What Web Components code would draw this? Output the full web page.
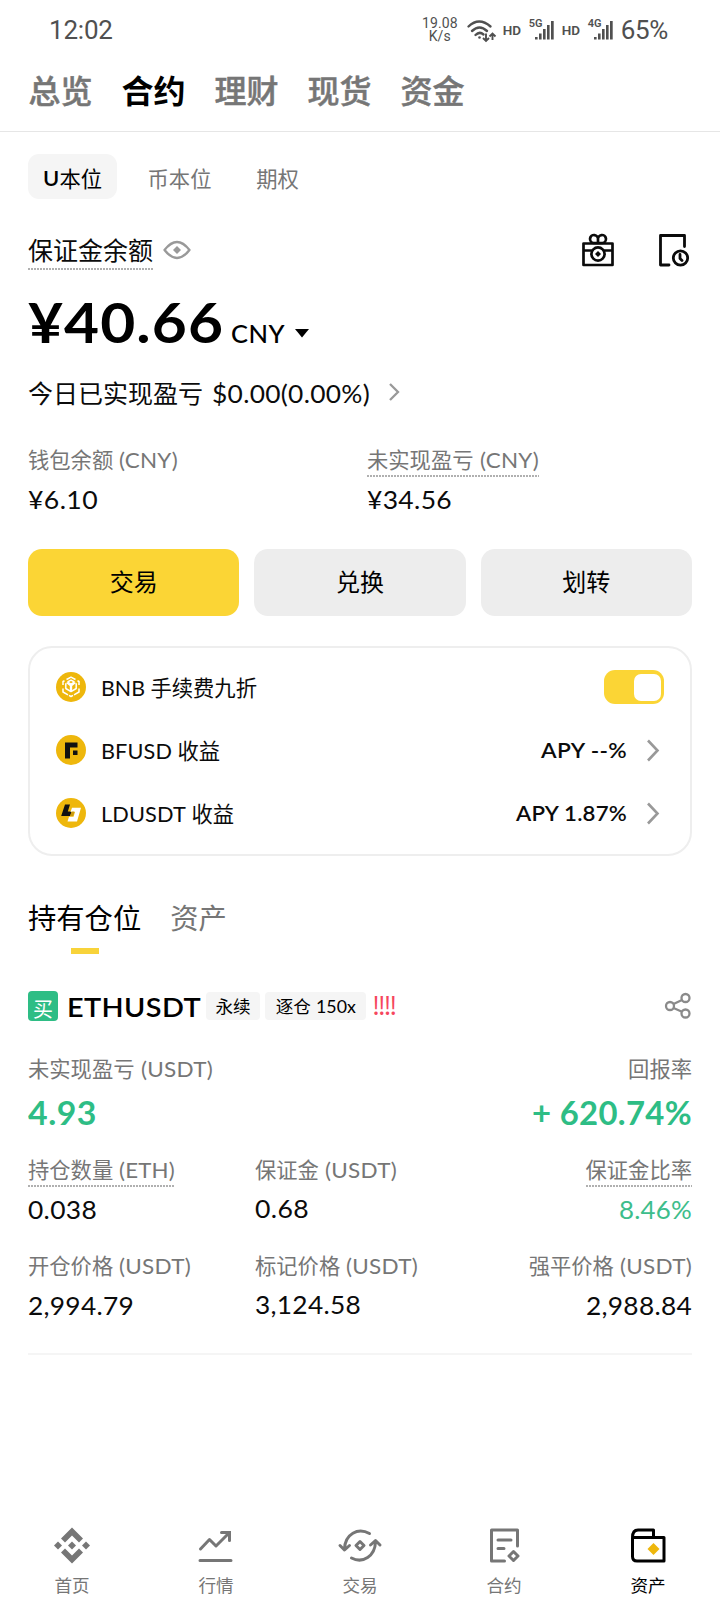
<!DOCTYPE html>
<html lang="zh-CN">
<head>
<meta charset="utf-8">
<meta name="viewport" content="width=device-width">
<title>合约资产</title>
<style>
html,body{margin:0;background:#fff}
body{font-family:Lato,"Noto Sans CJK SC",sans-serif;color:#0b0b0b}
</style>
</head>
<body>
<wallet-page></wallet-page>
<script>
const define=(name,html,setup)=>{
  const t=document.createElement('template');
  t.innerHTML=html;
  customElements.define(name,class extends HTMLElement{
    constructor(){super();this.attachShadow({mode:'open'}).append(t.content.cloneNode(true));}
    connectedCallback(){if(setup)setup(this,this.shadowRoot);}
  });
};

define('wallet-page',`<style>
:host{display:flex;flex-direction:column;width:720px;height:1600px;overflow:hidden;background:#fff}
main{padding:0 28px;display:flex;flex-direction:column}
.pills{display:flex;margin-top:22px;height:45px}
.balance{display:flex;align-items:center;height:41px;margin-top:31px;font-size:25px}
.balance .sp{flex:1}
.amount{display:flex;align-items:baseline;height:101px;line-height:102px;font-size:56px;font-weight:700;color:#000}
.amount .cur{font-size:24px;font-weight:500;margin-left:7px}
.today{display:flex;align-items:center;height:42px;font-size:25px;line-height:42px}
.wallet{display:grid;grid-template-columns:339px 1fr;margin-top:27px}
.actions{display:grid;grid-template-columns:repeat(3,1fr);gap:15px;margin-top:28px}
.head{display:flex;align-items:center;height:30px;margin-top:37px}
.sym{font-size:27.5px;font-weight:600;color:#000;margin:1px 5px 0 9px;line-height:30px}
.pnl{display:flex;justify-content:space-between;margin-top:29px}
.grid{display:grid;grid-template-columns:227px 227px 1fr;row-gap:16px;margin-top:11px}
hr{border:0;height:2px;background:#f5f5f5;margin:26px 0 0;width:664px}
bottom-nav{margin-top:auto}
</style>
<status-bar></status-bar>
<top-tabs></top-tabs>
<main>
 <div class="pills"><pill-tab active style="width:89px"><l-t w="16.5" style="font-weight:600">U</l-t>本位</pill-tab><pill-tab style="width:125px">币本位</pill-tab><pill-tab style="width:71px">期权</pill-tab></div>
 <div class="balance"><dotted-label style="--off:18.5px">保证金余额</dotted-label><ui-icon name="eye" style="margin:-2px 0 0 10px"></ui-icon><span class="sp"></span><ui-icon name="gift" style="margin-top:-1px"></ui-icon><ui-icon name="history" style="margin:-1px 3px 0 43px"></ui-icon></div>
 <div class="amount"><l-t w="196">¥40.66</l-t><span class="cur"><l-t w="54">CNY</l-t></span><ui-icon name="caret" style="margin-left:10px;align-self:flex-start;margin-top:58px"></ui-icon></div>
 <div class="today">今日已实现盈亏<l-t w="158" style="margin-left:9px">$0.00(0.00%)</l-t><ui-icon name="chev-s" style="margin:-2px 0 0 18px"></ui-icon></div>
 <div class="wallet">
  <stat-cell><span slot="label">钱包余额 <l-t w="59">(CNY)</l-t></span><l-t w="70">¥6.10</l-t></stat-cell>
  <stat-cell><dotted-label slot="label" style="--off:15.5px">未实现盈亏 <l-t w="59">(CNY)</l-t></dotted-label><l-t w="85">¥34.56</l-t></stat-cell>
 </div>
 <div class="actions"><action-button style="--bg:#fbd535">交易</action-button><action-button>兑换</action-button><action-button>划转</action-button></div>
 <perk-card>
  <perk-row><ui-icon slot="icon" name="bnb"></ui-icon><l-t w="44">BNB</l-t> 手续费九折<toggle-switch slot="end"></toggle-switch></perk-row>
  <perk-row><ui-icon slot="icon" name="bfusd"></ui-icon><l-t w="71">BFUSD</l-t> 收益<span slot="end"><l-t w="86">APY --%</l-t></span><ui-icon slot="end" name="chev" style="margin:0 4px 0 19px"></ui-icon></perk-row>
  <perk-row><ui-icon slot="icon" name="ldusdt"></ui-icon><l-t w="85">LDUSDT</l-t> 收益<span slot="end"><l-t w="111">APY 1.87%</l-t></span><ui-icon slot="end" name="chev" style="margin:0 4px 0 19px"></ui-icon></perk-row>
 </perk-card>
 <section-tabs></section-tabs>
 <div class="head"><side-badge>买</side-badge><span class="sym"><l-t w="134">ETHUSDT</l-t></span><mini-tag style="width:54px">永续</mini-tag><mini-tag style="width:101px;margin-left:5px">逐仓 <l-t w="40">150x</l-t></mini-tag><risk-mark>!!!!</risk-mark><ui-icon name="share" style="margin-left:auto;margin-right:1px"></ui-icon></div>
 <div class="pnl">
  <stat-cell big><span slot="label">未实现盈亏 <l-t w="72">(USDT)</l-t></span><l-t w="69">4.93</l-t></stat-cell>
  <stat-cell big end><span slot="label">回报率</span><l-t w="160">+ 620.74%</l-t></stat-cell>
 </div>
 <div class="grid">
  <stat-cell><dotted-label slot="label" style="--off:16px">持仓数量 <l-t w="56">(ETH)</l-t></dotted-label><l-t w="69">0.038</l-t></stat-cell>
  <stat-cell><span slot="label">保证金 <l-t w="72">(USDT)</l-t></span><l-t w="54" style="margin-top:-1px">0.68</l-t></stat-cell>
  <stat-cell end style="--val:#3dbd8b"><dotted-label slot="label" style="--off:16px">保证金比率</dotted-label><l-t w="73">8.46%</l-t></stat-cell>
  <stat-cell><span slot="label">开仓价格 <l-t w="72">(USDT)</l-t></span><l-t w="106">2,994.79</l-t></stat-cell>
  <stat-cell><span slot="label">标记价格 <l-t w="72">(USDT)</l-t></span><l-t w="106" style="margin-top:-1px">3,124.58</l-t></stat-cell>
  <stat-cell end><span slot="label">强平价格 <l-t w="72">(USDT)</l-t></span><l-t w="106">2,988.84</l-t></stat-cell>
 </div>
 <hr>
</main>
<bottom-nav></bottom-nav>`);

define('status-bar',`<style>
:host{display:flex;align-items:center;height:59px;padding:0 52px 0 49px;font-family:Roboto,sans-serif;color:#505050}
.time{font-size:26px;flex:1;letter-spacing:-.2px}
.rate{display:flex;flex-direction:column;align-items:center;font-size:14px;line-height:12.5px;margin-right:9px;letter-spacing:.1px}
.hd{font-size:13.5px;font-weight:600;width:19px;margin-right:7px}
.sig{display:flex;width:26px;margin-right:7px}
.sig span{font-size:11px;font-weight:600;line-height:10px;width:15px;margin:0 -9px 0 0;align-self:flex-start}
.pct{font-size:26px;letter-spacing:-.3px}
ui-icon{margin-top:2px}
</style><span class="time">12:02</span><span class="rate"><span>19.08</span><span>K/s</span></span><ui-icon name="wifi" style="margin-right:6px"></ui-icon><span class="hd">HD</span><span class="sig"><span>5G</span><ui-icon name="bars"></ui-icon></span><span class="hd">HD</span><span class="sig"><span>4G</span><ui-icon name="bars"></ui-icon></span><span class="pct">65%</span>`);

define('top-tabs',`<style>
:host{display:flex;gap:29px;padding:0 28.5px 11px;height:61px;border-bottom:1px solid #e6e6e6;line-height:61px;font-size:32px;font-weight:500;color:#767676;font-family:"Noto Sans CJK SC",sans-serif}
span{-webkit-text-stroke:.5px currentColor}
b{font-weight:700;color:#000}
</style><span>总览</span><b>合约</b><span>理财</span><span>现货</span><span>资金</span>`);

define('pill-tab',`<style>
:host{display:flex;justify-content:center;align-items:center;height:45px;box-sizing:border-box;padding-top:2px;border-radius:11px;font-size:21.3px;color:#767676}
:host([active]){background:#f5f5f5;color:#000}
</style><slot></slot>`);

define('dotted-label',`<style>
:host{display:inline-block;height:calc(var(--off)*2 + 2px);line-height:calc(var(--off)*2 + 2px);background:repeating-linear-gradient(90deg,#b0b0b0 0 2px,transparent 2px 3px) 0 100%/100% 2px no-repeat}
</style><slot></slot>`);

define('stat-cell',`<style>
:host{display:flex;flex-direction:column;align-items:flex-start;color:var(--val,#0b0b0b)}
:host([end]){align-items:flex-end}
.l{height:38px;line-height:38px;display:flex;align-items:center;color:#767676;font-size:21.3px;white-space:pre;word-spacing:.7px}
.v{height:42px;line-height:41px;font-size:25px;display:flex}
:host([big]){color:#2ebd85}
:host([big]) .l{height:37px}
:host([big]) .v{height:53px;line-height:53px;font-size:31.5px;font-weight:700}
</style><div class="l"><slot name="label"></slot></div><div class="v"><slot></slot></div>`);

define('action-button',`<style>
:host{display:flex;align-items:center;justify-content:center;height:67px;border-radius:14px;background:var(--bg,#ededed);font-size:24px;line-height:30px;padding-bottom:1px;box-sizing:border-box;color:#000}
</style><slot></slot>`);

define('perk-card',`<style>
:host{display:block;box-sizing:border-box;height:210px;margin-top:30px;border:2px solid #eee;border-radius:24px;padding:7.5px 26px 0 26px}
</style><slot></slot>`);

define('perk-row',`<style>
:host{display:flex;align-items:center;height:63px;font-size:21.3px}
.t{margin:-1px auto 0 15px;white-space:pre}
.e{display:flex;align-items:center;font-weight:600;line-height:23px}
</style><slot name="icon"></slot><span class="t"><slot></slot></span><span class="e"><slot name="end"></slot></span>`);

define('toggle-switch',`<style>
:host{display:flex;justify-content:flex-end;box-sizing:border-box;width:60px;height:34px;padding:3.5px;border-radius:11px;background:#fbd535}
i{width:27px;height:27px;border-radius:7px;background:#fff}
</style><i></i>`);

define('section-tabs',`<style>
:host{display:flex;gap:29px;height:56px;margin-top:42px;font-size:28.3px;line-height:40px;color:#767676}
div{display:flex;flex-direction:column;align-items:center;gap:10px;color:#000}
i{width:28px;height:6px;background:#f8d33a}
</style><div>持有仓位<i></i></div><span>资产</span>`);

define('side-badge',`<style>
:host{display:flex;box-sizing:border-box;width:30px;height:30px;padding-top:6px;justify-content:center;border-radius:4px;background:#2ebd85;color:#fff;font-size:20px;line-height:24px}
</style><slot></slot>`);

define('mini-tag',`<style>
:host{display:block;box-sizing:border-box;height:28px;line-height:30px;border-radius:4px;background:#f5f5f5;font-size:17.6px;text-align:center;white-space:pre;color:#000}
</style><slot></slot>`);

define('risk-mark',`<style>
:host{display:block;margin:-4px 0 0 6px;color:#f6465d;font-size:25px;line-height:30px;font-family:"Noto Sans CJK SC",sans-serif;letter-spacing:-2.3px}
</style><slot></slot>`);

define('bottom-nav',`<style>
:host{display:grid;grid-template-columns:repeat(5,144px);height:80px;color:#767676;font-size:17.6px}
div{display:flex;flex-direction:column;align-items:center;padding-top:6px}
span{line-height:30px;margin-top:5px}
.on{color:#000}
</style>
<div><ui-icon name="home"></ui-icon><span>首页</span></div><div><ui-icon name="market"></ui-icon><span>行情</span></div><div><ui-icon name="trade"></ui-icon><span>交易</span></div><div><ui-icon name="futures"></ui-icon><span>合约</span></div><div class="on"><ui-icon name="wallet"></ui-icon><span>资产</span></div>`);

const line='fill="none" stroke="currentColor" stroke-linecap="round" stroke-linejoin="round"';
const ICONS={
 wifi:[30,22,`<g fill="none" stroke="currentColor" stroke-width="2.4" stroke-linecap="round"><path d="M1.500 6.500Q12 -3.500 23.500 6.500M5 11Q12.500 4 20 11M8.500 15Q12.500 11 16.500 14.500"/></g><circle cx="12.500" cy="17.500" r="1.300" fill="currentColor"/><g fill="none" stroke="currentColor" stroke-width="1.900"><path d="M19 13.500V21M16 18L19 21L22 18M25.500 20V13.500M22.500 16.500L25.500 13.500L28.500 16.500"/></g>`],
 bars:[20,19,`<g fill="currentColor"><rect y="16" width="2.600" height="2.500"/><rect x="4" y="12.500" width="2.600" height="6"/><rect x="8" y="8" width="2.600" height="10.500"/><rect x="12" y="4" width="2.600" height="14.500"/><rect x="16" y="0" width="2.700" height="18.500"/></g>`],
 eye:[28,20,`<path d="M1.500 10Q14 -6 26.500 10Q14 26 1.500 10Z" fill="none" stroke="#999" stroke-width="2.300" stroke-linejoin="round"/><path d="M14 6L18 10L14 14L10 10Z" fill="#999"/>`],
 gift:[34,34,`<g ${line} stroke-width="2.700"><path d="M2.500 10.500H31.500V32H2.500ZM2.500 17.500H10.500M23.500 17.500H31.500"/><path d="M17 10H12.500A4 4 0 1 1 17 6.500V10H21.500A4 4 0 1 0 17 6.500"/><circle cx="17" cy="21" r="6.600"/></g><path d="M17 18L20 21L17 24L14 21Z" fill="currentColor"/>`],
 history:[31,34,`<g ${line} stroke-width="2.800"><path d="M11 32H2.500V2.500H26.500V13.500"/><circle cx="22.500" cy="25" r="7.200"/><path d="M22 21.500V25.500L24 27.500"/></g>`],
 caret:[14,9,`<path d="M0 0H14L7 8.500Z" fill="#000"/>`],
 'chev-s':[12,20,`<path d="M2 2L10 10L2 18" fill="none" stroke="#999" stroke-width="2.300"/>`],
 chev:[14,23,`<path d="M2 1.500L11.500 11.500L2 21.500" fill="none" stroke="#999" stroke-width="2.600"/>`],
 bnb:[30,30,`<circle cx="15" cy="15" r="15" fill="#eeb70c"/><g fill="none" stroke="#fff" stroke-width="1.500" stroke-linejoin="round"><path d="M10.500 7.500L15 5.200L19.500 7.500M7 13V9.500L8.500 8.800M23 13V9.500L21.500 8.800M7 16.500V20L12 22.800M23 16.500V20L18 22.800M9.800 11.200V16.500L15 19.600L20.200 16.500V11.200M11.500 10L15 8.200L18.500 10M13 23.300L15 24.500L17 23.300"/></g><path d="M10 11L12.500 9.800L15 11.200L17.500 9.800L20 11L16.200 14V19.500H13.800V14Z" fill="#fff"/>`],
 bfusd:[30,30,`<circle cx="15" cy="15" r="15" fill="#eeb70c"/><path d="M9 7.500H21.500V12.500H14V23.500H9ZM17 15.500H21.500V20H17Z" fill="#111"/>`],
 ldusdt:[30,30,`<circle cx="15" cy="15" r="15" fill="#eeb70c"/><path d="M9 6.500H14L11.800 13.500H16L14 18H5.200Z" fill="#111"/><path d="M16 9.800H25L21 23.500H11.500L13 18.800H17.500L19 14H14.500Z" fill="#fff"/><path d="M15.500 13.500H18.500L17 18H14Z" fill="#c99a10"/>`],
 share:[26,26,`<g fill="none" stroke="#8a8a8a" stroke-width="2.300"><circle cx="5" cy="13" r="4"/><circle cx="20.500" cy="5" r="4"/><circle cx="20.500" cy="20.500" r="4"/><path d="M8.500 11L17 7M8.500 15L17 18.700"/></g>`],
 home:[36,40,`<g fill="currentColor"><path d="M18 1.500L29 12.500L25 16.500L18 9.500L11 16.500L7 12.500ZM18 37.500L29 26.500L25 22.500L18 29.500L11 22.500L7 26.500ZM18 15.500L22 19.500L18 23.500L14 19.500ZM4 15.500L8 19.500L4 23.500L0 19.500ZM32 15.500L36 19.500L32 23.500L28 19.500Z"/></g>`],
 market:[36,40,`<g ${line} stroke-width="3"><path d="M2 34.500H33M2.500 23L11.500 13.500L18 20L31 7" /><path d="M23.500 6.500H31.500V14.500" stroke-linejoin="miter"/></g>`],
 trade:[44,40,`<g ${line} stroke-width="3"><path d="M31.500 7.500C20 1 7 8 6.500 23M2 19.500L6.500 24L11.500 19.500M13.500 32C25 38 37 30 37.500 16M32.500 19L37.500 14.500L42 19"/><path d="M22 15.500L26 19.500L22 23.500L18 19.500Z" stroke-width="3"/></g>`],
 futures:[34,40,`<g ${line} stroke-width="3"><path d="M17.500 35H4.500V4H30.500V20M11 14H24M11 22.500H17"/><path d="M26.500 25.500L31 30L26.500 34.500L22 30Z"/></g>`],
 wallet:[36,40,`<g ${line} stroke-width="3"><path d="M2.500 12V30.500Q2.500 35 7 35H34V11.500H2.500Q2.500 4 8 4H23.500V11"/></g><path d="M23.500 17L29.500 23L23.500 29L17.500 23Z" fill="#eeb70c"/>`]
};
define('ui-icon',`<style>:host{display:block;flex:none}svg{display:block;overflow:visible}</style><svg></svg>`,(el,root)=>{
  const [w,h,d]=ICONS[el.getAttribute('name')],s=root.querySelector('svg');
  s.setAttribute('width',w);s.setAttribute('height',h);s.setAttribute('viewBox','0 0 '+w+' '+h);s.innerHTML=d;
});

/* Latin run set to an exact advance width (attribute w, in px): most of the
   difference goes into wider glyphs, the rest into tracking. */
define('l-t',`<style>:host{display:inline-block;white-space:pre}span{display:inline-block;transform-origin:0 50%}</style><span><slot></slot></span>`,(el,root)=>{
  const w=+el.getAttribute('w'),n=el.textContent.length,nat=el.getBoundingClientRect().width;
  const s=Math.min(1.12,Math.pow(w/nat,.7)),span=root.querySelector('span');
  span.style.letterSpacing=(w/s-nat)/n+'px';
  span.style.transform='scaleX('+s+')';
  el.style.width=w+'px';
});
</script>
</body>
</html>
